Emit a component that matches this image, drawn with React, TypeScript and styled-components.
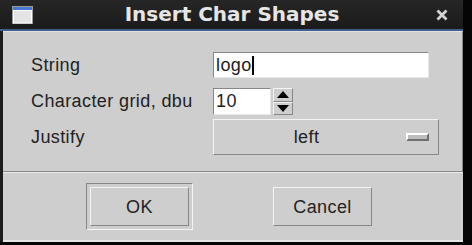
import React from 'react'
import styled, { createGlobalStyle } from 'styled-components'

const GlobalStyle = createGlobalStyle`
	html, body {
		margin: 0;
		padding: 0;
		background: #050505;
	}
	body {
		width: 472px;
		height: 245px;
		overflow: hidden;
	}
`

const BG = '#cecece'
const LIGHT = '#f4f4f4'
const DARK = '#878787'

const Window = styled.div`
	width: 463px;
	height: 242px;
	background: #1c1c1c;
	display: flex;
	flex-direction: column;
`

const TitleBar = styled.div`
	height: 29px;
	display: grid;
	grid-template-columns: 1fr auto 1fr;
	align-items: center;
	padding: 0 15px 0 12px;
	background: linear-gradient(#262626, #1b1b1b);
	border-bottom: 2px solid #3f5f8c;
`

const Title = styled.div`
	font-family: 'DejaVu Sans', sans-serif;
	font-weight: bold;
	font-size: 20px;
	color: #e6e6e6;
	line-height: 29px;
	padding-left: 4px;
`

const IconSlot = styled.div<{ $end?: boolean }>`
	display: flex;
	justify-content: ${(p) => (p.$end ? 'flex-end' : 'flex-start')};
	align-items: center;
`

const Body = styled.div`
	flex: 1;
	margin-left: 3px;
	background: ${BG};
	display: flex;
	flex-direction: column;
	font-family: 'Liberation Sans', Arial, sans-serif;
	font-size: 18px;
	letter-spacing: 0.4px;
	color: #222222;
`

const TopFrame = styled.div`
	height: 141px;
	box-sizing: border-box;
	border-top: 1px solid #e2e2e2;
	border-right: 1px solid ${DARK};
	border-bottom: 1px solid ${DARK};
	padding: 20px 0 0 28px;
	display: flex;
	flex-direction: column;
`

const Row = styled.div<{ $gap: number; $h: number }>`
	display: flex;
	align-items: center;
	margin-top: ${(p) => p.$gap}px;
	height: ${(p) => p.$h}px;
`

const Label = styled.div`
	width: 182px;
	flex: none;
`

const Entry = styled.div<{ $w: number }>`
	width: ${(p) => p.$w}px;
	height: 100%;
	box-sizing: border-box;
	background: #ffffff;
	border-top: 1px solid ${DARK};
	border-left: 1px solid ${DARK};
	border-bottom: 1px solid #e8e8e8;
	border-right: 1px solid #e8e8e8;
	padding-left: 2px;
	display: flex;
	align-items: center;
`

const Cursor = styled.span`
	display: inline-block;
	width: 2px;
	height: 19px;
	background: #000;
`

const Spinner = styled.div`
	display: flex;
	flex-direction: column;
	margin-left: 2px;
	height: 100%;
`

const SpinArrow = styled.div`
	flex: 1;
	width: 20px;
	box-sizing: border-box;
	border-top: 1px solid ${LIGHT};
	border-left: 1px solid ${LIGHT};
	border-bottom: 1px solid ${DARK};
	border-right: 1px solid ${DARK};
	display: flex;
	align-items: center;
	justify-content: center;
`

const MenuButton = styled.div`
	width: 226px;
	height: 100%;
	box-sizing: border-box;
	border-top: 1px solid ${LIGHT};
	border-left: 1px solid ${LIGHT};
	border-bottom: 1px solid ${DARK};
	border-right: 1px solid ${DARK};
	display: flex;
	align-items: center;
`

const MenuText = styled.div`
	flex: 1;
	text-align: center;
	padding-right: 7px;
`

const Indicator = styled.div`
	width: 23px;
	height: 8px;
	box-sizing: border-box;
	margin-right: 9px;
	border-top: 2px solid #ffffff;
	border-left: 2px solid #ffffff;
	border-bottom: 2px solid #6f6f6f;
	border-right: 2px solid #6f6f6f;
	background: #bdbdbd;
`

const BottomFrame = styled.div`
	flex: 1;
	border-top: 1px solid #ececec;
	border-bottom: 2px solid #e6e6e6;
	display: flex;
	align-items: center;
	padding-left: 83px;
	gap: 80px;
`

const DefaultRing = styled.div`
	box-sizing: border-box;
	padding: 3px;
	border-top: 1px solid ${DARK};
	border-left: 1px solid ${DARK};
	border-bottom: 1px solid ${LIGHT};
	border-right: 1px solid ${LIGHT};
	display: flex;
`

const Button = styled.div`
	width: 99px;
	height: 39px;
	box-sizing: border-box;
	border-top: 1px solid ${LIGHT};
	border-left: 1px solid ${LIGHT};
	border-bottom: 1px solid ${DARK};
	border-right: 1px solid ${DARK};
	display: flex;
	align-items: center;
	justify-content: center;
	padding-top: 1px;
`

const WindowIcon = () => (
	<svg width="21" height="18" viewBox="0 0 21 18">
		<rect x="0.5" y="0.5" width="20" height="17" fill="#ececec" stroke="#9a9a9a" />
		<rect x="1" y="1" width="19" height="3" fill="#4a78d0" />
		<rect x="1.5" y="4.5" width="18" height="12.5" fill="#e4e4e4" stroke="#ffffff" />
	</svg>
)

const CloseIcon = () => (
	<svg width="12" height="12" viewBox="0 0 12 12">
		<path d="M1.5 1.5 L10.5 10.5 M10.5 1.5 L1.5 10.5" stroke="#d4d4d4" strokeWidth="2.8" />
	</svg>
)

const Arrow = ({ up }: { up?: boolean }) => (
	<svg width="12" height="7" viewBox="0 0 12 7">
		<path d={up ? 'M6 0 L12 7 L0 7 Z' : 'M0 0 L12 0 L6 7 Z'} fill="#000" />
	</svg>
)

export default function App() {
	return (
		<>
			<GlobalStyle />
			<Window>
				<TitleBar>
					<IconSlot>
						<WindowIcon />
					</IconSlot>
					<Title>Insert Char Shapes</Title>
					<IconSlot $end>
						<CloseIcon />
					</IconSlot>
				</TitleBar>
				<Body>
					<TopFrame>
						<Row $gap={0} $h={26}>
							<Label>String</Label>
							<Entry $w={216}>
								logo
								<Cursor />
							</Entry>
						</Row>
						<Row $gap={10} $h={27}>
							<Label>Character grid, dbu</Label>
							<Entry $w={58}>10</Entry>
							<Spinner>
								<SpinArrow>
									<Arrow up />
								</SpinArrow>
								<SpinArrow>
									<Arrow />
								</SpinArrow>
							</Spinner>
						</Row>
						<Row $gap={4} $h={36}>
							<Label>Justify</Label>
							<MenuButton>
								<MenuText>left</MenuText>
								<Indicator />
							</MenuButton>
						</Row>
					</TopFrame>
					<BottomFrame>
						<DefaultRing>
							<Button>OK</Button>
						</DefaultRing>
						<Button>Cancel</Button>
					</BottomFrame>
				</Body>
			</Window>
		</>
	)
}
